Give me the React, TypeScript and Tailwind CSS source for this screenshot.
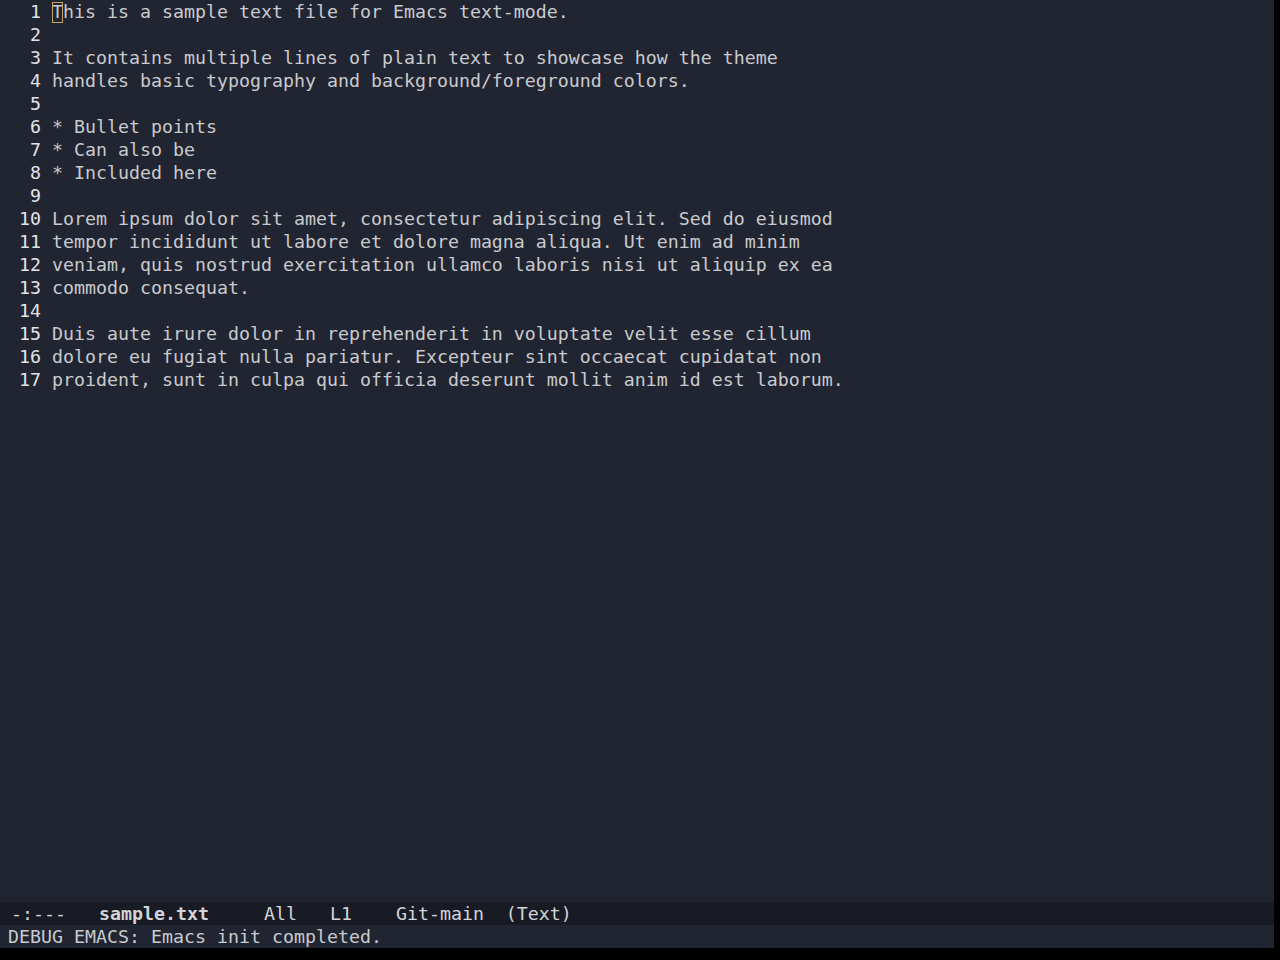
import React from "react";

const lines = [
  "This is a sample text file for Emacs text-mode.",
  "",
  "It contains multiple lines of plain text to showcase how the theme",
  "handles basic typography and background/foreground colors.",
  "",
  "* Bullet points",
  "* Can also be",
  "* Included here",
  "",
  "Lorem ipsum dolor sit amet, consectetur adipiscing elit. Sed do eiusmod",
  "tempor incididunt ut labore et dolore magna aliqua. Ut enim ad minim",
  "veniam, quis nostrud exercitation ullamco laboris nisi ut aliquip ex ea",
  "commodo consequat.",
  "",
  "Duis aute irure dolor in reprehenderit in voluptate velit esse cillum",
  "dolore eu fugiat nulla pariatur. Excepteur sint occaecat cupidatat non",
  "proident, sunt in culpa qui officia deserunt mollit anim id est laborum.",
];

const mono = "font-['DejaVu_Sans_Mono',monospace] text-[18.27px] leading-[23px]";

export default function App() {
  return (
    <div className="w-[1280px] h-[960px] bg-black overflow-hidden">
      <div className={`w-[1274px] h-[948px] flex flex-col bg-[#212531] ${mono}`}>
        {/* buffer */}
        <div className="flex-1 pl-2 text-[#c9cacd]">
          {lines.map((line, i) => (
            <div key={i} className="flex whitespace-pre h-[23px]">
              <span className="w-[33px] text-right text-[#e2e3e6]">{i + 1}</span>
              <span className="w-[11px]"> </span>
              {i === 0 ? (
                <span>
                  <span className="relative">
                    T
                    <span className="absolute left-0 top-[1px] w-[11px] h-[21px] border border-[#c8a464]" />
                  </span>
                  {line.slice(1)}
                </span>
              ) : (
                <span>{line}</span>
              )}
            </div>
          ))}
        </div>

        {/* mode line */}
        <div className="h-[23px] bg-[#181b24] text-[#d3d4d7] whitespace-pre">
          {" -:---   "}
          <span className="font-bold">sample.txt</span>
          {"     All   L1    Git-main  (Text)"}
        </div>

        {/* echo area */}
        <div className="h-[23px] pl-2 text-[#c9cacd] whitespace-pre">
          DEBUG EMACS: Emacs init completed.
        </div>
      </div>
    </div>
  );
}
